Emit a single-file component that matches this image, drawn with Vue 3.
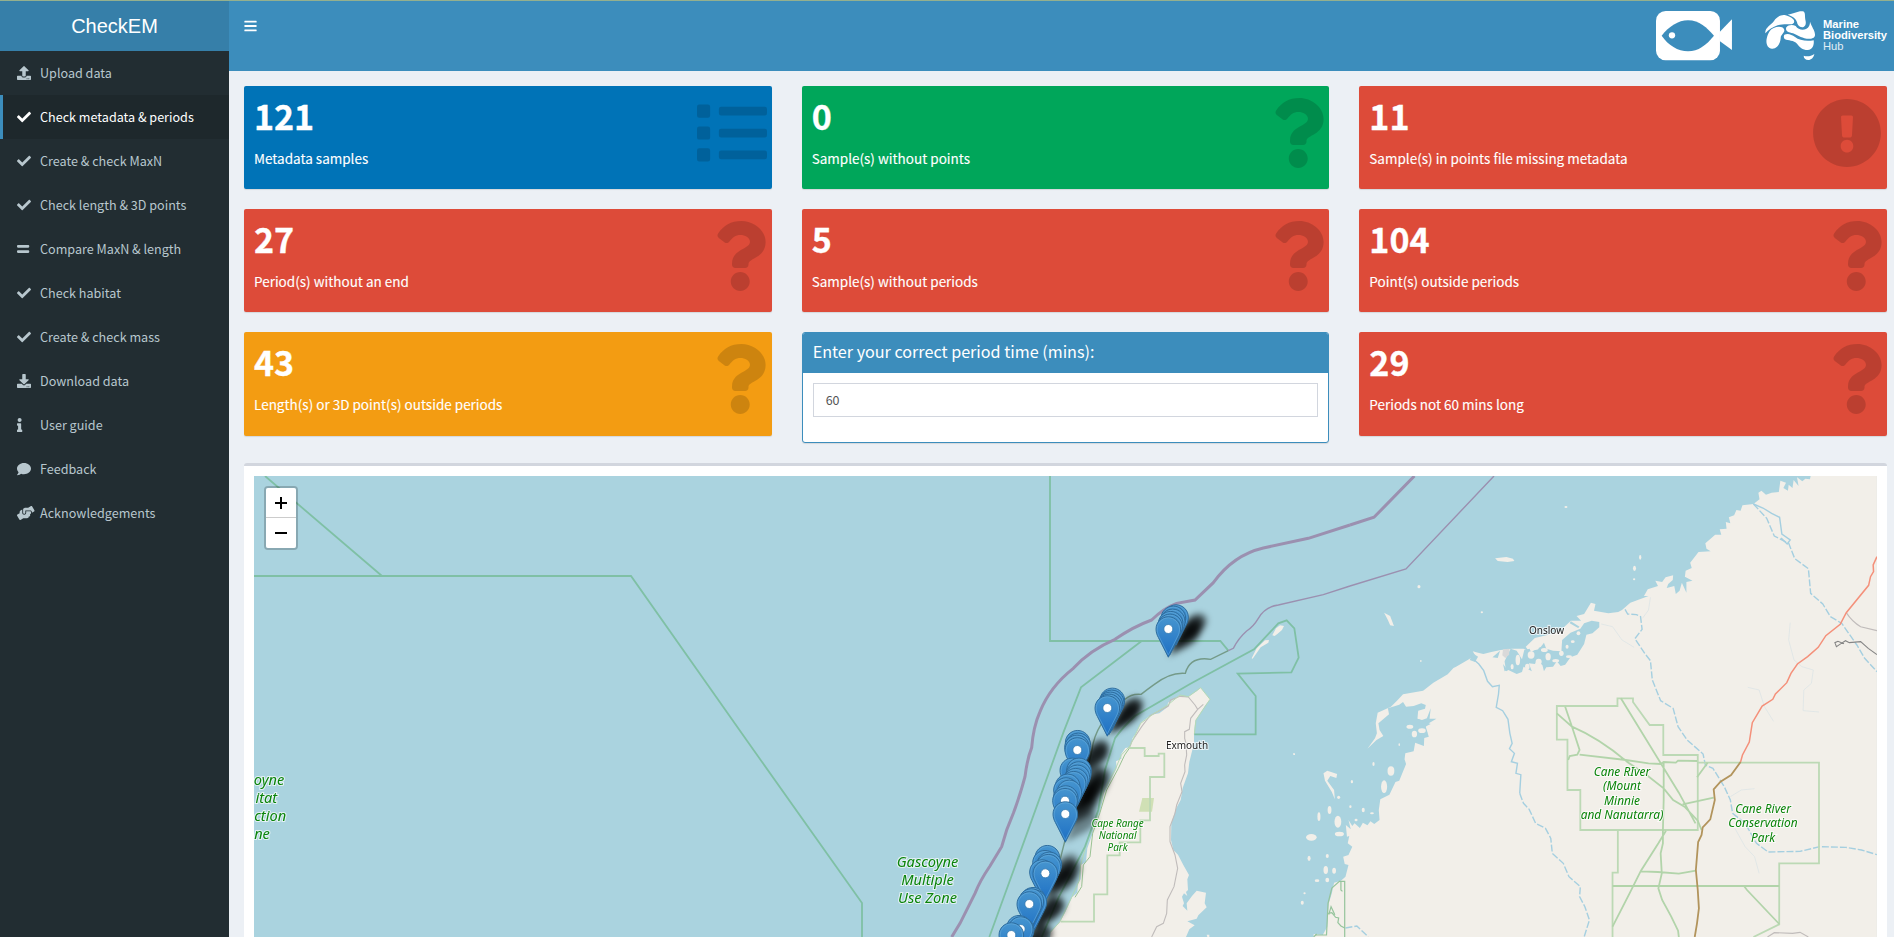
<script setup>
const icons = {
  upload: { w: 512, d: 'M296 384h-80c-13.3 0-24-10.7-24-24V192h-87.7c-17.8 0-26.7-21.5-14.1-34.1L242.3 5.7c7.5-7.5 19.8-7.5 27.3 0l152.2 152.2c12.6 12.6 3.7 34.1-14.1 34.1H320v168c0 13.3-10.7 24-24 24zm216-8v112c0 13.3-10.7 24-24 24H24c-13.3 0-24-10.7-24-24V376c0-13.3 10.7-24 24-24h136v8c0 30.9 25.1 56 56 56h80c30.9 0 56-25.1 56-56v-8h136c13.3 0 24 10.7 24 24zm-124 88c0-11-9-20-20-20s-20 9-20 20 9 20 20 20 20-9 20-20zm64 0c0-11-9-20-20-20s-20 9-20 20 9 20 20 20 20-9 20-20z' },
  check: { w: 512, d: 'M173.898 439.404l-166.4-166.4c-9.997-9.997-9.997-26.206 0-36.204l36.203-36.204c9.997-9.998 26.207-9.998 36.204 0L192 312.69 432.095 72.596c9.997-9.997 26.207-9.997 36.204 0l36.203 36.204c9.997 9.997 9.997 26.206 0 36.204l-294.4 294.401c-9.998 9.997-26.207 9.997-36.204-.001z' },
  equals: { w: 448, d: 'M416 304H32c-17.67 0-32 14.33-32 32v32c0 17.67 14.33 32 32 32h384c17.67 0 32-14.33 32-32v-32c0-17.67-14.33-32-32-32zm0-192H32c-17.67 0-32 14.33-32 32v32c0 17.67 14.33 32 32 32h384c17.67 0 32-14.33 32-32v-32c0-17.67-14.33-32-32-32z' },
  download: { w: 512, d: 'M216 0h80c13.3 0 24 10.7 24 24v168h87.7c17.8 0 26.7 21.5 14.1 34.1L269.7 378.3c-7.5 7.5-19.8 7.5-27.3 0L90.1 226.1c-12.6-12.6-3.7-34.1 14.1-34.1H192V24c0-13.3 10.7-24 24-24zm296 376v112c0 13.3-10.7 24-24 24H24c-13.3 0-24-10.7-24-24V376c0-13.3 10.7-24 24-24h146.7l49 49c20.1 20.1 52.5 20.1 72.6 0l49-49H488c13.3 0 24 10.7 24 24zm-124 88c0-11-9-20-20-20s-20 9-20 20 9 20 20 20 20-9 20-20zm64 0c0-11-9-20-20-20s-20 9-20 20 9 20 20 20 20-9 20-20z' },
  info: { w: 192, d: 'M20 424.229h20V279.771H20c-11.046 0-20-8.954-20-20V212c0-11.046 8.954-20 20-20h112c11.046 0 20 8.954 20 20v212.229h20c11.046 0 20 8.954 20 20V492c0 11.046-8.954 20-20 20H20c-11.046 0-20-8.954-20-20v-47.771c0-11.046 8.954-20 20-20zM96 0C56.235 0 24 32.235 24 72s32.235 72 72 72 72-32.235 72-72S135.764 0 96 0z' },
  comment: { w: 512, d: 'M256 32C114.6 32 0 125.1 0 240c0 49.6 21.4 95 57 130.7C44.5 421.1 2.7 466 2.2 466.5c-2.2 2.3-2.8 5.7-1.5 8.7S4.8 480 8 480c66.3 0 116-31.8 140.6-51.4 32.7 12.3 69 19.4 107.4 19.4 141.4 0 256-93.1 256-208S397.4 32 256 32z' },
  hands: { w: 640, d: 'M488 192H336v56c0 39.7-32.3 72-72 72s-72-32.3-72-72V126.4l-64.9 39C107.8 176.9 96 197.8 96 220.2v47.3l-80 46.2C.7 322.5-4.6 342.1 4.3 357.4l80 138.6c8.8 15.3 28.4 20.5 43.7 11.7L231.4 448H368c35.3 0 64-28.7 64-64h16c17.7 0 32-14.3 32-32v-64h8c13.3 0 24-10.7 24-24v-48c0-13.3-10.7-24-24-24zm147.7-37.4L555.7 16C546.9.7 527.3-4.5 512 4.3L408.6 64H306.4c-12 0-23.7 3.4-33.9 9.7L239 94.6c-9.4 5.8-15 16.1-15 27.1V248c0 22.1 17.9 40 40 40s40-17.9 40-40v-88h184c30.9 0 56 25.1 56 56v28.5l80-46.2c15.3-8.9 20.5-28.4 11.7-43.7z' },
  bars: { w: 448, d: 'M16 132h416c8.837 0 16-7.163 16-16V76c0-8.837-7.163-16-16-16H16C7.163 60 0 67.163 0 76v40c0 8.837 7.163 16 16 16zm0 160h416c8.837 0 16-7.163 16-16v-40c0-8.837-7.163-16-16-16H16c-8.837 0-16 7.163-16 16v40c0 8.837 7.163 16 16 16zm0 160h416c8.837 0 16-7.163 16-16v-40c0-8.837-7.163-16-16-16H16c-8.837 0-16 7.163-16 16v40c0 8.837 7.163 16 16 16z' },
  question: { w: 384, d: 'M202.021 0C122.202 0 70.503 32.703 29.914 91.026c-7.363 10.58-5.093 25.086 5.178 32.874l43.138 32.709c10.373 7.865 25.132 6.026 33.253-4.148 25.049-31.381 43.63-49.449 82.757-49.449 30.764 0 68.816 19.799 68.816 49.631 0 22.552-18.617 34.134-48.993 51.164-35.423 19.86-82.299 44.576-82.299 106.405V320c0 13.255 10.745 24 24 24h72.471c13.255 0 24-10.745 24-24v-5.773c0-42.86 125.268-44.645 125.268-160.627C377.504 66.256 286.902 0 202.021 0zM192 373.459c-38.196 0-69.271 31.075-69.271 69.271 0 38.195 31.075 69.27 69.271 69.27s69.271-31.075 69.271-69.271-31.075-69.27-69.271-69.27z' },
  exclamation: { w: 512, d: 'M504 256c0 136.997-111.043 248-248 248S8 392.997 8 256C8 119.083 119.043 8 256 8s248 111.083 248 248zm-248 50c-25.405 0-46 20.595-46 46s20.595 46 46 46 46-20.595 46-46-20.595-46-46-46zm-43.673-165.346l7.418 136c.347 6.364 5.609 11.346 11.982 11.346h48.546c6.373 0 11.635-4.982 11.982-11.346l7.418-136c.375-6.874-5.098-12.654-11.982-12.654h-63.383c-6.884 0-12.356 5.78-11.981 12.654z' },
  list: { w: 512, d: 'M16 48h64a16 16 0 0 1 16 16v64a16 16 0 0 1-16 16H16a16 16 0 0 1-16-16V64a16 16 0 0 1 16-16zm0 160h64a16 16 0 0 1 16 16v64a16 16 0 0 1-16 16H16a16 16 0 0 1-16-16v-64a16 16 0 0 1 16-16zm0 160h64a16 16 0 0 1 16 16v64a16 16 0 0 1-16 16H16a16 16 0 0 1-16-16v-64a16 16 0 0 1 16-16zM176 64h320a16 16 0 0 1 16 16v32a16 16 0 0 1-16 16H176a16 16 0 0 1-16-16V80a16 16 0 0 1 16-16zm0 160h320a16 16 0 0 1 16 16v32a16 16 0 0 1-16 16H176a16 16 0 0 1-16-16v-32a16 16 0 0 1 16-16zm0 160h320a16 16 0 0 1 16 16v32a16 16 0 0 1-16 16H176a16 16 0 0 1-16-16v-32a16 16 0 0 1 16-16z' },
}

const menu = [
  { icon: 'upload', label: 'Upload data' },
  { icon: 'check', label: 'Check metadata & periods', active: true },
  { icon: 'check', label: 'Create & check MaxN' },
  { icon: 'check', label: 'Check length & 3D points' },
  { icon: 'equals', label: 'Compare MaxN & length' },
  { icon: 'check', label: 'Check habitat' },
  { icon: 'check', label: 'Create & check mass' },
  { icon: 'download', label: 'Download data' },
  { icon: 'info', label: 'User guide' },
  { icon: 'comment', label: 'Feedback' },
  { icon: 'hands', label: 'Acknowledgements' },
]

const cards = [
  { value: '121', label: 'Metadata samples', color: 'blue', icon: 'list' },
  { value: '0', label: 'Sample(s) without points', color: 'green', icon: 'question' },
  { value: '11', label: 'Sample(s) in points file missing metadata', color: 'red', icon: 'exclamation' },
  { value: '27', label: 'Period(s) without an end', color: 'red', icon: 'question' },
  { value: '5', label: 'Sample(s) without periods', color: 'red', icon: 'question' },
  { value: '104', label: 'Point(s) outside periods', color: 'red', icon: 'question' },
  { value: '43', label: 'Length(s) or 3D point(s) outside periods', color: 'orange', icon: 'question' },
  { input: true },
  { value: '29', label: 'Periods not 60 mins long', color: 'red', icon: 'question' },
]

// Marker head centres, in thirds of a pixel from the peninsula group's origin
const pins = [
  [678, 471], [670, 475], [668, 484], [662, 491], [660, 499], [655, 507],
  [487, 721], [485, 727], [481, 733], [477, 739], [472, 744],
  [383, 848], [385, 856], [381, 862], [382, 870],
  [367, 931], [387, 931], [386, 942], [382, 952], [377, 962], [371, 971],
  [353, 979], [348, 990], [358, 997], [347, 1014], [345, 1022], [346, 1062],
  [292, 1193], [285, 1208], [298, 1213], [295, 1220], [276, 1236], [286, 1240],
  [249, 1319], [253, 1326], [244, 1323], [238, 1332],
  [207, 1403], [215, 1409], [212, 1407], [184, 1425],
].map(([x, y]) => ({ x: 950 + x / 3, y: 460 + y / 3 }))

const labels = [
  { size: 14.6, lh: 18, x: 269, y: 785.3, lines: ['oyne'] },
  { size: 14.6, lh: 18, x: 266.3, y: 803.3, lines: ['itat'] },
  { size: 14.6, lh: 18, x: 270.2, y: 821.3, lines: ['ction'] },
  { size: 14.6, lh: 18, x: 262, y: 839.3, lines: ['ne'] },
  { size: 14.6, lh: 18, x: 927.5, y: 866.8, lines: ['Gascoyne', 'Multiple', 'Use Zone'] },
  { size: 9.9, lh: 12, x: 1117.6, y: 826.5, lines: ['Cape Range', 'National', 'Park'] },
  { size: 11.9, lh: 14.4, x: 1622, y: 776, lines: ['Cane RIver', '(Mount', 'Minnie', 'and Nanutarra)'] },
  { size: 11.9, lh: 14.4, x: 1763, y: 813, lines: ['Cane River', 'Conservation', 'Park'] },
]

// Islets: centre x, centre y, radius x, radius y (coast group units)
const islets = [
  [702, 141, 4, 3], [314, 380, 4, 5], [480, 457, 3, 3], [319, 603, 2, 3], [898, 292, 3, 7], [883, 325, 4, 8], [882, 358, 3, 3],
  [240, 933, 9, 14], [222, 980, 8, 19], [137, 965, 3, 5], [194, 912, 3, 6], [262, 854, 2, 4],
  [102, 1012, 4, 5], [100, 1085, 9, 18], [104, 1122, 12, 7], [78, 1050, 5, 12], [50, 1070, 4, 13], [30, 1132, 14, 10],
  [68, 1230, 6, 12], [90, 1232, 5, 9], [72, 1188, 4, 6], [24, 1195, 4, 8], [45, 1262, 6, 4], [72, 1260, 5, 7], [6, 1328, 4, 6], [12, 1300, 3, 3],
  [167, 1050, 4, 7], [190, 1060, 5, 3], [148, 1080, 4, 4], [133, 1040, 3, 4], [290, 800, 9, 6], [302, 822, 7, 10], [322, 812, 10, 7],
]
const lagoonIslets = [
  [575, 600, 6, 16], [610, 585, 9, 11], [630, 605, 8, 9], [655, 590, 7, 11], [675, 602, 9, 5], [690, 580, 6, 8],
  [705, 560, 4, 6], [720, 545, 5, 4], [645, 570, 9, 6], [620, 565, 10, 5], [710, 590, 8, 4], [600, 620, 6, 9], [735, 520, 5, 6], [560, 620, 4, 8],
]
</script>

<template>
  <div class="page">
    <div class="topline"></div>
    <div class="shell">
      <aside class="sidebar">
        <div class="brand">CheckEM</div>
        <nav>
          <a v-for="m in menu" :key="m.label" class="item" :class="{ active: m.active }">
            <svg class="ico" :viewBox="`0 0 ${icons[m.icon].w} 512`"><path :d="icons[m.icon].d" /></svg>
            <span>{{ m.label }}</span>
          </a>
        </nav>
      </aside>
      <div class="main">
        <header class="navbar">
          <svg class="burger" viewBox="0 0 448 512"><path :d="icons.bars.d" /></svg>
          <div class="logos">
            <svg class="fish" viewBox="169 34 229 149">
              <rect x="169" y="34" width="192" height="148" rx="29" />
              <path d="M360 97L397 59V151L360 124Z" />
              <path class="cut" d="M186 108C208 80 236 62 265 62C299 62 322 85 343 108C320 136 296 155 265 155C235 155 205 136 186 108Z" />
              <circle cx="217" cy="107" r="9.5" />
            </svg>
            <svg class="aus" viewBox="494 34 152 149">
              <path d="M495 101C493 84 512 76 521 64C528 52 543 44 553 46C563 49 574 53 580 60C584 67 580 74 570 74C556 73 542 74 532 77C518 82 504 90 495 101Z" />
              <path d="M562 45C580 43 590 34 607 35C616 36 613 48 615 60C619 74 614 82 605 83C596 82 591 75 590 68C586 54 576 50 562 45Z" />
              <path d="M520 85C534 78 551 81 552 91C552 101 541 105 541 115C540 133 529 148 515 147C502 146 496 132 499 117C503 101 508 90 520 85Z" />
              <path d="M629 66C634 82 644 92 644 106C643 117 630 118 619 117C600 114 592 106 578 101C563 97 554 94 558 83C564 75 577 74 586 79C593 90 607 93 617 88C626 83 629 76 629 66Z" />
              <path d="M552 105C563 100 574 105 584 112C597 122 617 126 640 122C642 135 637 151 622 151C606 151 598 142 590 132C581 122 563 123 554 119C549 114 550 108 552 105Z" />
              <path d="M610 168C620 172 632 170 642 163C640 174 632 181 624 181C615 180 610 176 610 168Z" />
            </svg>
            <div class="hub"><b>Marine</b><b>Biodiversity</b><span>Hub</span></div>
          </div>
        </header>
        <main class="content">
          <section class="cards">
            <template v-for="(c, i) in cards" :key="i">
              <div v-if="c.input" class="box">
                <h3>Enter your correct period time (mins):</h3>
                <div class="box-body"><div class="field">60</div></div>
              </div>
              <div v-else class="card" :class="c.color">
                <div>
                  <h2>{{ c.value }}</h2>
                  <p>{{ c.label }}</p>
                </div>
                <svg class="big" :viewBox="`0 0 ${icons[c.icon].w} 512`"><path :d="icons[c.icon].d" /></svg>
              </div>
            </template>
          </section>
          <section class="mapbox">
            <div class="map">
              <svg class="canvas" viewBox="254 476 1623 461">
                <defs>
                  <linearGradient id="pinFill" x1="0" y1="0" x2="0" y2="1">
                    <stop offset="0" stop-color="#4695cf" /><stop offset="1" stop-color="#1d6fc4" />
                  </linearGradient>
                  <filter id="soft" x="-50%" y="-50%" width="200%" height="200%"><feGaussianBlur stdDeviation="3" /></filter>
                  <g id="pin">
                    <path d="M0 28.2L-10 8.4C-11.6 5.6-12.3 2.8-12.3 0C-12.3-6.8-6.8-12.2 0-12.2S12.3-6.8 12.3 0C12.3 2.8 11.6 5.6 10 8.4Z" fill="url(#pinFill)" stroke="#2e6c9d" stroke-width="1" />
                    <path d="M0 25.8L-9 8C-10.5 5.3-11.2 2.6-11.2 0A11.2 11.2 0 0 1 11.2 0C11.2 2.6 10.5 5.3 9 8Z" fill="none" stroke="#68aede" stroke-width=".9" opacity=".6" />
                    <circle r="4.5" fill="#fff" stroke="#2f76ad" stroke-width=".8" />
                  </g>
                </defs>

                <!-- mainland coast -->
                <g transform="translate(1300 460) scale(.378827 .333333)">
                  <path class="land" d="M1348 48L1346 58L1334 56L1326 64L1312 52L1316 78L1303 60L1300 84L1290 74L1288 92L1276 84L1283 68L1268 62L1264 96L1245 98L1230 104L1218 92L1210 98L1213 118L1197 132L1168 136L1163 152L1152 150L1146 166L1132 172L1136 190L1124 186L1126 206L1108 208L1112 224L1096 224L1070 250L1073 266L1084 274L1052 276L1030 308L1034 324L1018 332L1016 350L1036 362L1020 366L1020 398L1008 368L1002 392L992 402L988 378L968 384L972 372L984 360L985 346L965 352L956 366L938 362L945 378L918 388L908 408L920 408L872 428L850 450L840 456L814 460L776 452L780 432L768 428L750 462L730 468L742 482L715 482L698 500L692 512L650 526L620 534L596 560L604 574L590 566L560 566L530 570L505 576L484 582L470 578L456 574L462 586L446 598L412 620L405 624L390 643L352 668L325 692L272 703L256 722L240 740L205 758L200 790L203 820L198 835L178 866L202 840L220 828L210 810L207 790L235 763L232 745L262 734L272 726L280 740L300 738L320 730L332 735L330 746L312 752L310 776L322 780L335 775L345 745L342 776L360 776L340 790L332 800L340 830L328 834L327 858L304 848L300 874L278 880L276 898L280 912L262 962L252 966L236 1004L212 1018L208 1050L210 1080L196 1092L186 1084L178 1096L166 1088L158 1104L144 1090L138 1098L128 1080L134 1108L121 1095L124 1130L130 1128L126 1150L138 1160L128 1185L114 1190L118 1212L128 1215L120 1250L108 1262L90 1268L84 1300L76 1330L74 1360L72 1400L60 1425L36 1422L36 1431H1523V48Z" />
                  <path class="water" d="M548 584L556 566L572 572L586 598L592 570L606 566L610 576L636 560L644 548L650 566L668 572L690 574L692 540L714 518L740 506L750 490L770 482L790 486L790 502L772 520L756 524L750 552L732 584L714 592L700 614L688 618L678 604L668 620L650 622L644 634L640 616L626 600L620 612L604 610L612 634L590 620L586 636L572 642L550 630L544 634L540 604Z" />
                  <ellipse v-for="(e, i) in lagoonIslets" :key="'l' + i" class="land" :cx="e[0]" :cy="e[1]" :rx="e[2]" :ry="e[3]" />
                  <path class="water" d="M715 484L738 500L734 504L712 490ZM508 592L528 572L522 594ZM456 580L470 590L462 606L448 600ZM536 612L548 630L540 634Z" />
                  <path class="water" d="M310 776L345 792L330 800L336 818L322 830L300 818L290 840L284 812L300 795Z" />
                  <ellipse v-for="(e, i) in islets" :key="i" class="land" :cx="e[0]" :cy="e[1]" :rx="e[2]" :ry="e[3]" />
                  <path class="land" d="M515 295L545 291L562 296L566 303L548 306L522 303ZM222 458L238 468L242 480L248 498L238 496L232 480ZM62 940L72 932L98 942L96 954L80 948L72 962L90 990L92 1018L84 996L66 962Z" />
                  <path d="M536 568L553 566L552 584L542 594L534 586Z" fill="#d9d9d9" />
                  <g class="creek">
                    <path d="M460 600L472 612L485 632L495 664L508 680L526 676L524 702L518 742L535 752L549 778L554 820L560 850L553 866L566 880L558 905L574 910L570 940L583 944L580 1000" />
                    <path class="dash" d="M580 1000L590 1030L605 1048L622 1090L648 1105L662 1135L666 1180L695 1210L710 1250L740 1280L738 1310L752 1340L764 1380L750 1431" />
                    <path class="dash" d="M858 448L865 462L888 464L899 470L903 508L884 536L910 580L925 602L930 660L952 722L985 745L998 800L1022 840L1064 882L1070 915L1090 925L1120 980L1136 1020L1142 1060L1175 1090L1205 1150L1236 1176L1320 1174L1372 1160L1440 1162L1482 1170L1523 1184" />
                    <path d="M1197 132L1222 144L1245 160L1266 172L1272 222L1294 240L1286 252L1270 234" />
                    <path class="dash" d="M1197 132L1232 175L1252 228L1290 250L1306 296L1342 326L1348 400L1380 432L1400 470L1430 490L1470 555L1490 594L1523 635" />
                    <path class="thin" d="M925 412L920 450L904 475M795 492L825 500L850 540L882 562M1294 488L1290 540L1304 600L1325 620L1355 630L1350 670L1330 690L1328 752L1370 756M1182 682L1212 690L1226 740L1250 784M1136 1010L1165 990L1200 986M1148 1105L1175 1160L1200 1190L1212 1240" />
                    <path class="dash" d="M120 1404L150 1398L180 1430" />
                  </g>
                  <g class="parks">
                    <path d="M678 738H838V715H879V726L923 795H959V885H1050V1110H740V990H706V839H678Z" />
                    <path d="M1050 908H1370V1210H1265V1278H825V1238H839V1110M825 1278V1431M1265 1278V1393L1197 1431" />
                    <g class="strong">
                      <path d="M678 760L718 800Q790 835 863 905L915 945L960 985L985 1020L1015 1040L1050 1082L1060 1110M700 740L718 800L738 870L732 884L712 888L708 900M738 884L860 900L920 910L952 912L960 906L992 908L998 902L1048 903M847 715L1000 998L1044 1090M1010 1033L1092 1013M1076 908L1048 952M960 905V1020L958 1110L958 1150L952 1180L955 1240L946 1285L956 1320L980 1370L998 1412L1000 1431M966 1112L946 1150L900 1232L870 1300L825 1400M900 1234L945 1236L1000 1241L1045 1232M1172 1278L1180 1290L1265 1392M825 1278H1265" />
                    </g>
                    <path class="sea-zone" d="M40 1425L70 1425L74 1330L84 1284L104 1264H118V1431" />
                    <path class="sea-zone" d="M108 1264V1290L112 1294M74 1360L84 1358L94 1372L102 1374L100 1388L108 1398L118 1404M76 1364L82 1340L92 1364M44 1422L36 1431" />
                  </g>
                  <path class="rail" d="M1442 458Q1458 486 1480 500L1523 512" />
                  <path class="rail dark" d="M1523 584L1500 565L1480 545L1450 548L1440 542L1425 553L1416 560L1412 548L1420 544L1436 551" />
                  <path class="rail" d="M1234 1431L1252 1418L1300 1420L1320 1417L1342 1431" />
                  <path class="road" d="M1523 290L1513 315L1514 335L1506 350L1501 376L1442 458L1426 493L1388 527L1368 562L1340 590L1313 612L1296 640L1285 668L1255 702L1248 718L1220 738L1194 788L1186 846L1168 885L1163 906" />
                  <path class="road tan" d="M1163 906L1138 945L1110 965L1092 988L1095 1020L1083 1078L1063 1102L1060 1125L1051 1146L1045 1230L1050 1290L1053 1345L1048 1390L1042 1431" />
                </g>

                <!-- peninsula and marine zones -->
                <g transform="translate(950 460) scale(.333333)">
                  <path class="land" d="M300 1431L302 1416L328 1388L345 1358L366 1312L382 1298L384 1268L392 1258L392 1215L408 1206L412 1165L428 1120L430 1098L450 1056L462 1000L490 945L500 924L498 904L514 896L514 882L526 864L540 862L548 834L558 820L572 788L604 764L628 760L652 742L654 728L690 707L712 712L740 694L752 683L764 698L780 718L766 736L736 782L732 815L732 850L718 906L714 940L698 984L692 1020L678 1046L664 1090L663 1140L670 1170L684 1184L700 1215L717 1245L712 1258L714 1290L708 1296L712 1308L702 1300L696 1310L702 1330L698 1338L712 1352L710 1330L726 1308L740 1292L768 1298L764 1330L770 1342L745 1366L740 1376L712 1384L734 1396L718 1408L708 1431Z" />
                  <path class="land" d="M905 595L920 565L945 541L957 540L955 548L932 562L908 596ZM967 526L978 505L990 496L1002 498L996 510L982 522L974 528ZM1029 880L1035 880L1035 885L1030 885ZM770 1424L778 1424L778 1431H772Z" />
                  <path d="M577 1014H612L606 1055H567Z" fill="#d0e0b5" />
                  <path class="rail" d="M540 860L545 845L575 800L600 767L655 738L662 720L690 709L715 711L735 735L743 748L760 733M743 748L722 775L718 808L704 815L704 835L708 850L710 885L704 915L705 935L692 970L696 995L680 1035L675 1060L660 1100L660 1145L675 1185L683 1225L672 1280L652 1320L650 1360L640 1390L620 1400L605 1431" />
                  <path class="coast" d="M375 1312L395 1280L400 1215L420 1190L428 1120L450 1058L470 990L505 925L524 885L540 862" />
                  <path class="coast light" d="M300 1418L330 1385L366 1310L388 1262L392 1215L410 1150L440 1070L462 990L495 930L514 885L540 858L572 790L610 762L652 736L690 705L715 710L752 683L780 718L738 780L733 823" />
                  <g class="parks"><path d="M536 864H584V888H626V881H643V951H600V1081H571V1147H509V1186H472V1303H432V1385H332" /></g>
                  <g class="zone">
                    <path d="M300 48V543H811L835 572M575 543L393 682L340 818L222 1145L118 1431M275 1431L326 1312L405 1160L445 1050L465 930L495 835Q520 800 555 768L720 672L912 568L985 490L1010 481L1033 505L1046 593L1024 637L863 641L917 708V823H733" />
                  </g>
                  <path class="state" d="M835 572L782 598Q720 588 706 640Q660 636 612 674Q590 690 573 703Q545 700 525 718Q480 760 455 790Q430 830 426 870Q410 950 345 1141L330 1200" />
                  <path class="border thick" d="M5 1431L30 1390L45 1360L75 1300Q90 1262 120 1218L155 1160L170 1110L190 1060Q212 1000 225 950Q232 895 245 863Q250 800 270 755Q300 680 370 625Q420 570 495 538Q550 500 605 480Q640 445 680 430L735 420L790 368Q850 285 940 264L1075 235L1200 195" />
                  <path class="border" d="M835 572L850 565Q865 535 890 513Q910 500 925 475Q945 440 985 435L1120 404L1200 378" />
                </g>
                <g class="border">
                  <path class="thick" d="M1350 525L1374 517.3L1414.4 476" />
                  <path d="M1350 586L1406 569L1494 476" />
                </g>
                <path class="zone" d="M265 476L382 576M254 576H631L746.5 740L862 903V937" />

                <g class="shade" filter="url(#soft)">
                  <path v-for="(p, i) in pins" :key="i" d="M0 28C4 18 8 6 16 -1C22 -6 30 -4 31 2C32 9 25 15 18 19C12 22 6 25 0 28Z" :transform="`translate(${p.x} ${p.y})`" />
                </g>
                <g class="town">
                  <text x="1187" y="749.3">Exmouth</text>
                  <text x="1546.5" y="634.3">Onslow</text>
                </g>
                <g v-for="(l, i) in labels" :key="'t' + i" class="place" :font-size="l.size">
                  <text v-for="(t, j) in l.lines" :key="j" :x="l.x" :y="l.y + j * l.lh">{{ t }}</text>
                </g>
                <use v-for="(p, i) in pins" :key="'p' + i" href="#pin" :transform="`translate(${p.x} ${p.y})`" />
              </svg>
              <div class="zoom"><span><i class="h"></i><i class="v"></i></span><span><i class="h"></i></span></div>
            </div>
          </section>
        </main>
      </div>
    </div>
  </div>
</template>

<style>
body { margin: 0; overflow: hidden; }
</style>

<style scoped>
* { box-sizing: border-box; }
.page { height: 937px; overflow: hidden; background: #ecf0f5; font-family: "Noto Sans CJK SC", "Open Sans", sans-serif; display: flex; flex-direction: column; }
.topline { height: 1px; background: #94b08e; flex: none; }
.shell { display: flex; flex: 1; min-height: 0; }
.sidebar { width: 229px; flex: none; background: #222d32; }
.brand { height: 50px; background: #367fa9; color: #fff; font: 20px/50px "Liberation Sans", Arial, sans-serif; text-align: center; }
.item { display: grid; grid-template-columns: 18px 1fr; align-items: center; height: 44px; border-left: 3px solid transparent; padding-left: 14px; color: #b8c7ce; font-size: 12.6px; line-height: 20px; white-space: nowrap; }
.item.active { background: #1e282c; border-left-color: #3c8dbc; color: #fff; }
.item span { margin-left: 5px; }
.ico { height: 14px; width: auto; overflow: visible; fill: currentColor; }
.main { flex: 1; min-width: 0; display: flex; flex-direction: column; }
.navbar { height: 70px; flex: none; background: #3c8dbc; display: flex; justify-content: space-between; padding: 0 7px 0 15px; }
.burger { height: 14px; width: 13px; fill: #fff; margin-top: 18px; }
.logos { display: flex; }
.logos svg { fill: #fff; }
.fish { width: 76.3px; height: 49.7px; margin-top: 10.3px; }
.cut { fill: #3c8dbc; }
.aus { width: 50.7px; height: 49.7px; margin: 10.3px 0 0 32px; }
.hub { width: 64px; margin: 18px 0 0 7.8px; color: #fff; font: 11.2px/11px "Liberation Sans", Arial, sans-serif; display: flex; flex-direction: column; }
.hub span { opacity: .85; }
.content { padding: 15px 7px 0 15px; flex: 1; min-height: 0; display: flex; flex-direction: column; }
.cards { display: grid; grid-template-columns: repeat(3, 1fr); column-gap: 30px; row-gap: 20px; align-items: start; }
.card { height: 103.24px; padding: 9px 5px 10px 10px; border-radius: 2px; color: #fff; box-shadow: 0 1px 1px rgba(0, 0, 0, .1); display: flex; justify-content: space-between; }
.blue { background: #0073b7; }
.green { background: #00a65a; }
.red { background: #dd4b39; }
.orange { background: #f39c12; }
h2 { margin: 0 0 11px; font-size: 34px; line-height: 41.8px; font-weight: 700; -webkit-text-stroke: .35px #fff; }
p { margin: 0; font-size: 13.5px; line-height: 21.4px; -webkit-text-stroke: .12px #fff; }
.big { height: 70px; margin-top: 3px; fill: #000; opacity: .15; flex: none; }
.box { height: 110.8px; background: #fff; border: 1px solid #3c8dbc; border-radius: 3px; box-shadow: 0 1px 1px rgba(0, 0, 0, .1); overflow: hidden; }
.box h3 { margin: 0; height: 40px; padding: 0 10px; background: #3c8dbc; color: #fff; font-size: 16.15px; font-weight: 400; line-height: 36.5px; }
.box-body { padding: 10px; }
.field { height: 34px; border: 1px solid #d2d6de; padding: 0 12px; font-size: 12.5px; line-height: 32px; color: #555; }
.mapbox { margin-top: 20px; flex: 1; min-height: 0; background: #fff; border-top: 3px solid #d2d6de; border-radius: 3px 3px 0 0; padding: 10px 10px 0; }
.map { height: 461px; background: #aad3df; position: relative; overflow: hidden; }
.canvas { display: block; width: 1623px; height: 461px; }
.zoom { position: absolute; left: 10px; top: 10px; width: 32px; border: 2px solid rgba(0, 0, 0, .2); border-radius: 4px; background-clip: padding-box; }
.zoom span { height: 30px; background: #fff; display: grid; place-items: center; }
.zoom span:first-child { border-bottom: 1px solid #ccc; border-radius: 2px 2px 0 0; }
.zoom span:last-child { border-radius: 0 0 2px 2px; }
.zoom { width: 34px; }
.zoom i { grid-area: 1 / 1; background: #000; }
.zoom .h { width: 12px; height: 2px; }
.zoom .v { width: 2px; height: 12px; }
.canvas path { vector-effect: non-scaling-stroke; }
.land { fill: #f2efe9; }
.water { fill: #aad3df; }
.creek path { fill: none; stroke: #a5cfe0; stroke-width: 1.4; }
.creek .dash { stroke-dasharray: 7 2; }
.creek .thin { stroke: #dde5e6; stroke-width: .8; }
.parks path { fill: none; stroke: #bcd9b5; stroke-width: 1.8; }
.parks .strong path { stroke: #b2d4aa; }
.parks .sea-zone { stroke: #95c49c; stroke-width: 1.2; }
.rail { fill: none; stroke: #c0bcbb; stroke-width: 1.1; }
.rail.dark { stroke: #858585; }
.road { fill: none; stroke: #f4907a; stroke-width: 1.5; }
.road.tan { stroke: #b2945c; stroke-width: 1.8; }
.coast { fill: none; stroke: #9ac394; stroke-width: 1; }
.coast.light { stroke: #b5dab5; }
.zone, .zone path { fill: none; stroke: #7fc0a5; stroke-width: 1.8; }
.state { fill: none; stroke: #749a88; stroke-width: 1.4; }
.border, .border path { fill: none; stroke: #9b90b0; stroke-width: 1.4; }
.border.thick, .border path.thick { stroke-width: 3; }
.shade { fill: #000; }
.shade path { opacity: .38; }
.town text { font: 10px "Noto Sans", sans-serif; text-anchor: middle; fill: #222; stroke: #fff; stroke-opacity: .7; stroke-width: 2.2px; paint-order: stroke; }
.place text { font-family: "Noto Sans", sans-serif; font-style: italic; text-anchor: middle; fill: #0a840a; stroke: #fff; stroke-opacity: .65; stroke-width: 2.2px; paint-order: stroke; }
</style>
